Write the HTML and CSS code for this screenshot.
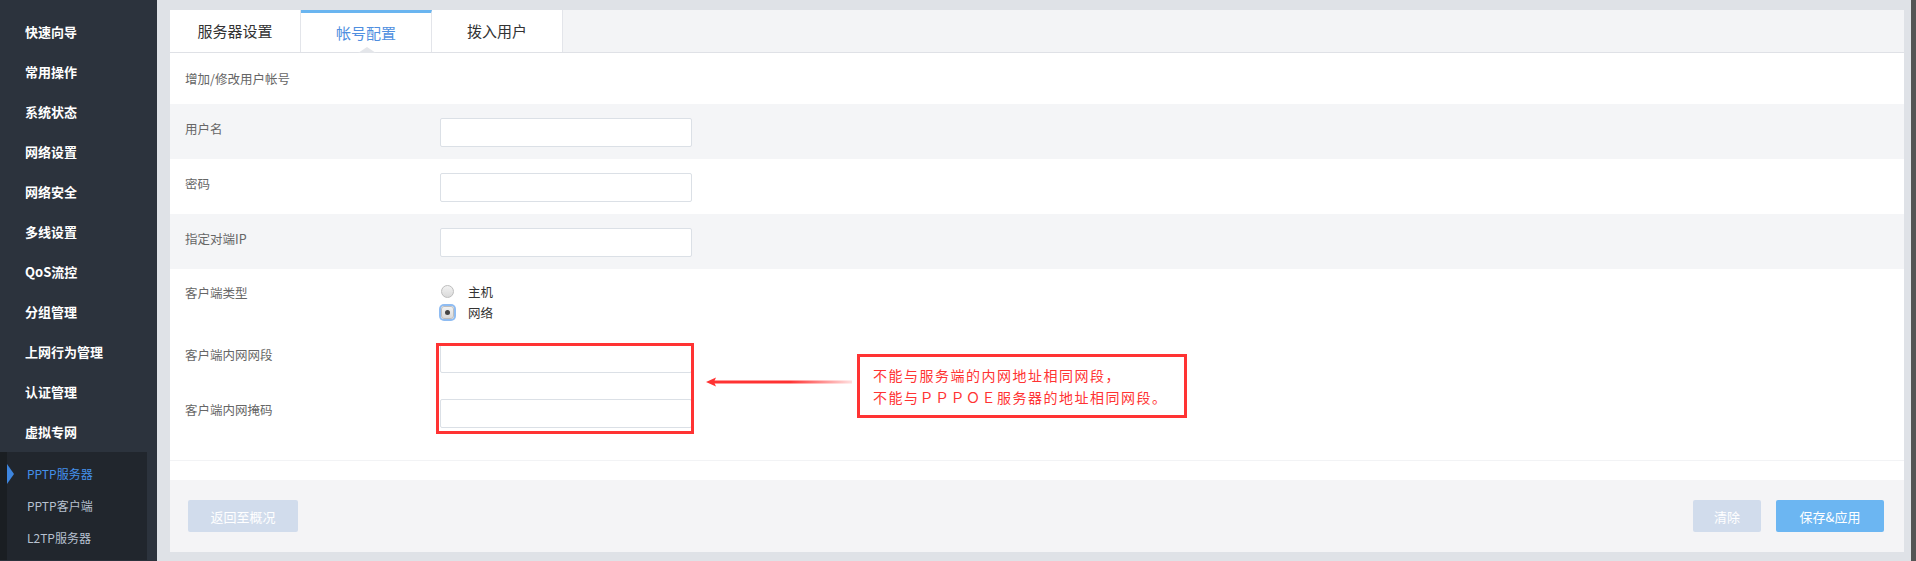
FILE: index.html
```html
<!DOCTYPE html>
<html lang="zh-CN">
<head>
  <meta charset="UTF-8" />
  <title>PPTP服务器</title>
  <link rel="stylesheet" href="styles.css">
</head>
<body>
  <div class="sidebar">
    <ul class="menu">
      <li>快速向导</li>
      <li>常用操作</li>
      <li>系统状态</li>
      <li>网络设置</li>
      <li>网络安全</li>
      <li>多线设置</li>
      <li>QoS流控</li>
      <li>分组管理</li>
      <li>上网行为管理</li>
      <li>认证管理</li>
      <li>虚拟专网</li>
    </ul>
    <div class="submenu">
      <div class="sub-item active">PPTP服务器</div>
      <div class="sub-item">PPTP客户端</div>
      <div class="sub-item">L2TP服务器</div>
    </div>
  </div>

  <div class="main">
    <div class="card">
      <div class="tabs">
        <div class="tab">服务器设置</div>
        <div class="tab active">帐号配置</div>
        <div class="tab">拨入用户</div>
      </div>

      <div class="form">
        <div class="form-title">增加/修改用户帐号</div>

        <div class="row gray">
          <label>用户名</label>
          <input type="text" />
        </div>
        <div class="row">
          <label>密码</label>
          <input type="password" />
        </div>
        <div class="row gray">
          <label>指定对端IP</label>
          <input type="text" />
        </div>
        <div class="row radios-row">
          <label>客户端类型</label>
          <div class="radios">
            <div class="radio-line"><span class="radio"></span>主机</div>
            <div class="radio-line"><span class="radio checked"></span>网络</div>
          </div>
        </div>
        <div class="row">
          <label>客户端内网网段</label>
          <input type="text" />
        </div>
        <div class="row">
          <label>客户端内网掩码</label>
          <input type="text" />
        </div>
        <div class="form-end"></div>

        <!-- annotation from the screenshot -->
        <div class="mark-box"></div>
        <svg class="mark-arrow" width="146" height="12" viewBox="0 0 146 12">
          <defs>
            <linearGradient id="fade" x1="0" x2="1" y1="0" y2="0">
              <stop offset="0" stop-color="#f33"/>
              <stop offset="0.55" stop-color="#f33"/>
              <stop offset="1" stop-color="#f33" stop-opacity="0.15"/>
            </linearGradient>
          </defs>
          <rect x="8" y="4.5" width="138" height="3" fill="url(#fade)"/>
          <polygon points="0,6 10,1.5 8,6 10,10.5" fill="#f33"/>
        </svg>
        <div class="mark-note">不能与服务端的内网地址相同网段，<br>不能与ＰＰＰＯＥ服务器的地址相同网段。</div>
      </div>

      <div class="footer">
        <button class="btn btn-light">返回至概况</button>
        <div class="footer-right">
          <button class="btn btn-light small">清除</button>
          <button class="btn btn-blue">保存&amp;应用</button>
        </div>
      </div>
    </div>
  </div>

  <div class="scrollbar"></div>
</body>
</html>
```

FILE: styles.css
```css
body {
  margin: 0;
  height: 561px;
  overflow: hidden;
  display: flex;
  background: #dfe2e7;
  font-family: "Noto Sans CJK SC", "Noto Sans", sans-serif;
}
.sidebar {
  width: 157px;
  flex-shrink: 0;
  background: #2c333d;
}
.menu {
  list-style: none;
  margin: 0;
  padding: 12px 0 0 0;
}
.menu li {
  height: 40px;
  line-height: 40px;
  padding-left: 25px;
  color: #fff;
  font-size: 13px;
  font-weight: bold;
}
.submenu {
  width: 140px;
  margin-left: 7px;
  padding: 6px 0;
  background: #21262d;
  box-shadow: -7px 0 0 #1a1e22;
}
.sub-item {
  position: relative;
  height: 32px;
  line-height: 32px;
  padding-left: 20px;
  font-size: 12px;
  color: #b7c1d0;
}
.sub-item.active {
  color: #4490ea;
}
.sub-item.active::before {
  content: "";
  position: absolute;
  left: 0;
  top: 6px;
  border-left: 7px solid #3d85de;
  border-top: 10px solid transparent;
  border-bottom: 10px solid transparent;
}
.main {
  flex: 1;
  padding: 10px 7px 0 13px;
}
.card {
  background: #fff;
  height: 542px;
  display: flex;
  flex-direction: column;
}
.tabs {
  display: flex;
  height: 42px;
  background: #f3f4f6;
  border-bottom: 1px solid #dfe1e6;
}
.tab {
  position: relative;
  width: 130px;
  background: #fff;
  border-right: 1px solid #e3e5ea;
  text-align: center;
  line-height: 42px;
  font-size: 15px;
  color: #333;
}
.tab.active {
  height: 39px;
  line-height: 40px;
  border-top: 3px solid #6ab5f0;
  color: #4f8fe0;
}
.tab.active::after {
  content: "";
  position: absolute;
  left: 57px;
  bottom: -1px;
  border-bottom: 6px solid #e4e6ea;
  border-left: 9px solid transparent;
  border-right: 9px solid transparent;
}
.form {
  position: relative;
  flex: 1;
}
.form-title {
  height: 51px;
  line-height: 52px;
  padding-left: 15px;
  font-size: 12.5px;
  color: #666;
}
.row {
  display: flex;
  height: 55px;
  padding-left: 15px;
}
.row.gray {
  background: #f4f5f7;
}
.row label {
  width: 255px;
  padding-top: 15px;
  font-size: 12.5px;
  color: #666;
}
.row input {
  width: 252px;
  height: 29px;
  margin-top: 14px;
  box-sizing: border-box;
  border: 1px solid #dbe0e6;
  border-radius: 2px;
  background: #fff;
}
.row.radios-row {
  height: 61px;
}
.row.radios-row label {
  padding-top: 14px;
}
.radios {
  padding-top: 12px;
  padding-left: 1px;
}
.radio-line {
  display: flex;
  align-items: center;
  height: 21px;
  font-size: 12.5px;
  color: #333;
}
.radio {
  width: 11px;
  height: 11px;
  margin: 0 14px 0 0;
  border: 1px solid #bdbdbd;
  border-radius: 50%;
  background: linear-gradient(#f2f2f2, #dadada);
  box-sizing: content-box;
  position: relative;
}
.radio.checked {
  box-shadow: 0 0 0 2px #8fbcf2;
  border-radius: 3px;
}
.radio.checked::after {
  content: "";
  position: absolute;
  left: 3px;
  top: 3px;
  width: 5px;
  height: 5px;
  border-radius: 50%;
  background: #444;
}
.form-end {
  height: 20px;
  border-bottom: 1px solid #f2f3f5;
}
.mark-box {
  position: absolute;
  left: 266px;
  top: 290px;
  width: 252px;
  height: 85px;
  border: 3px solid #f33;
}
.mark-arrow {
  position: absolute;
  left: 536px;
  top: 323px;
}
.mark-note {
  position: absolute;
  left: 687px;
  top: 301px;
  width: 311px;
  height: 44px;
  padding: 7px 0 7px 13px;
  border: 3px solid #f33;
  font-size: 14px;
  line-height: 22px;
  color: #f33;
  letter-spacing: 1.5px;
  white-space: nowrap;
}
.footer {
  height: 72px;
  margin-top: 19px;
  padding: 20px 20px 0 18px;
  box-sizing: border-box;
  background: #f4f4f6;
  display: flex;
  justify-content: space-between;
}
.footer-right {
  display: flex;
  gap: 15px;
}
.btn {
  height: 32px;
  padding: 0;
  border: none;
  border-radius: 2px;
  color: #fff;
  font-family: "Noto Sans CJK SC", sans-serif;
  font-size: 13px;
  width: 110px;
}
.btn.small {
  width: 68px;
}
.btn-light {
  background: #d1dcec;
}
.btn-blue {
  width: 108px;
  background: #6cb6f2;
}
.scrollbar {
  width: 5px;
  flex-shrink: 0;
  background: #555;
}
```
